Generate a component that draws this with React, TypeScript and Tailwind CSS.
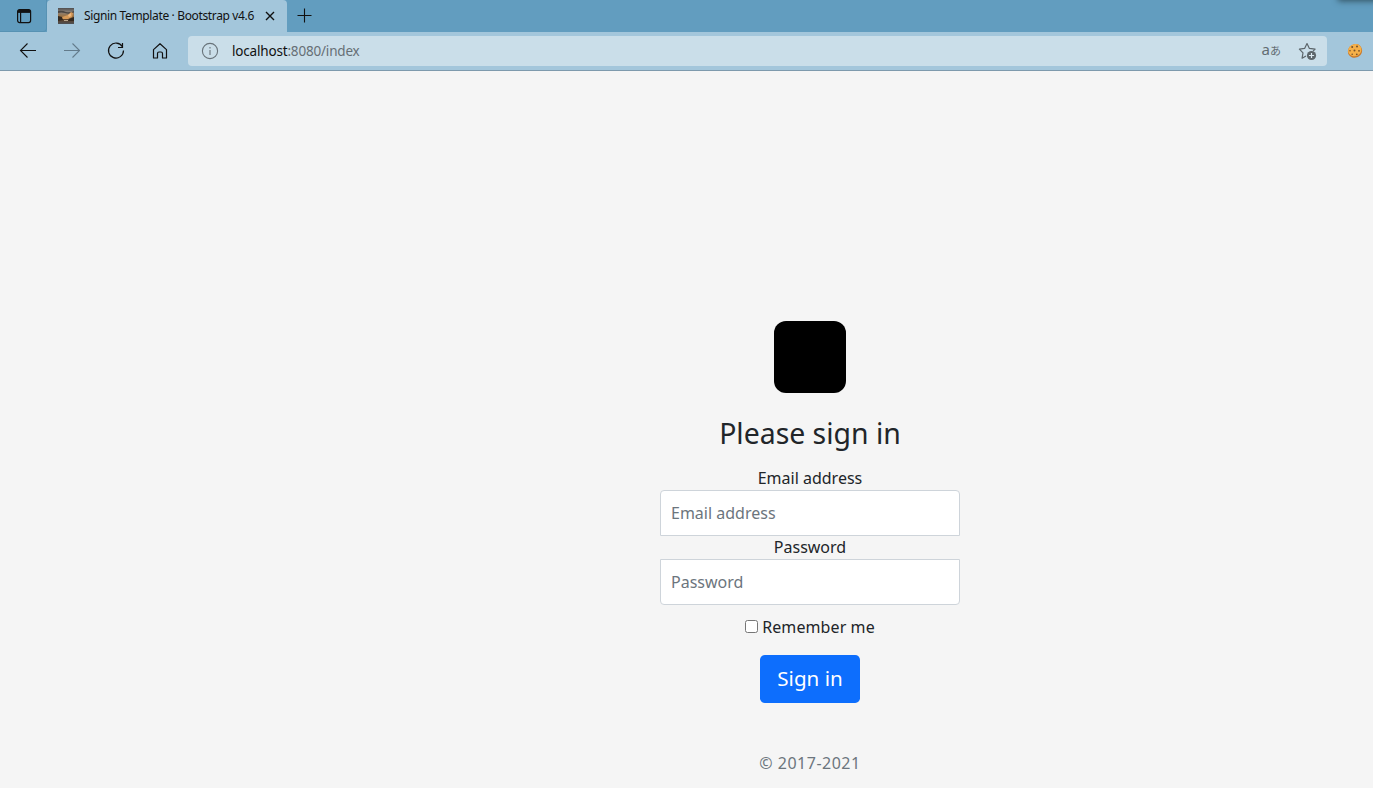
import React from "react";

function Toolbar() {
  return (
    <div className="flex h-[39px] items-center border-b border-[#7e9aad] bg-[#a3c6db] text-[#111]">
      <svg className="ml-[19px] h-[18px] w-[18px]" viewBox="0 0 18 18" fill="none" stroke="currentColor" strokeWidth="1.1">
        <path d="M17 8.5H1.5M8.5 1.5l-7 7 7 7" />
      </svg>
      <svg className="ml-[26px] h-[18px] w-[18px] text-[#637b8b]" viewBox="0 0 18 18" fill="none" stroke="currentColor" strokeWidth="1.1">
        <path d="M1 8.5h15.5M9.5 1.5l7 7-7 7" />
      </svg>
      <svg className="ml-[26px] h-[18px] w-[18px]" viewBox="0 0 18 18" fill="none" stroke="currentColor" strokeWidth="1.2">
        <path d="M15.4 4.6A7.5 7.5 0 1 0 16.5 8.5M15.5 1v4.5H11" />
      </svg>
      <svg className="ml-[26px] h-[18px] w-[18px]" viewBox="0 0 18 18" fill="none" stroke="currentColor" strokeWidth="1.2" strokeLinejoin="round">
        <path d="M2.5 7.6 9 1.7l6.5 5.9v8.4h-4v-4.5q0-1.5-1.5-1.5H8q-1.5 0-1.5 1.5v4.5h-4z" />
      </svg>
      <div className="ml-[19px] flex h-[30px] w-[1139px] items-center rounded bg-[#cadee9]">
        <svg className="ml-[13px] h-[18px] w-[18px] text-[#68737a]" viewBox="0 0 18 18" fill="none" stroke="currentColor" strokeWidth="1.1">
          <circle cx="9" cy="9" r="7.6" />
          <path d="M9 8v5M9 5v1.4" />
        </svg>
        <span className="ml-[13px] whitespace-nowrap text-[13.5px] leading-5 tracking-[-0.18px] text-[#666f75]">
          <span className="text-[#111]">localhost</span>:8080/index
        </span>
        <span className="mb-[3px] ml-auto flex items-baseline text-[#626c72]">
          <span className="text-[15px] leading-5">a</span>
          <span className="font-['Noto_Sans_CJK_JP',sans-serif] text-[11px] leading-5">あ</span>
        </span>
        <svg className="mr-[9px] ml-[17px] h-[20px] w-[20px] text-[#5c656a]" viewBox="0 0 20 20" fill="none" stroke="currentColor" strokeWidth="1.2" strokeLinejoin="round">
          <path d="M8 15 4.1 17.2 5 11.9 1.4 8.1l5.2-.7L9 2.6l2.4 4.8 5.7.7-2 2" />
          <circle cx="13.5" cy="14.5" r="4.6" fill="currentColor" stroke="none" />
          <path d="M13.5 11.9v5.2M10.9 14.5h5.2" stroke="#dceaf2" />
        </svg>
      </div>
      <svg className="ml-[20px] h-[16px] w-[16px]" viewBox="0 0 16 16">
        <path d="M7 1.2q5-1 7.3 3.2 2 4-.8 7.5-3.5 4-8.4 2.5Q.2 12.2 1 7.5 1.7 2.8 7 1.2Z" fill="#c9792b" />
        <path d="M7 1.2q4.7-.8 6.8 2.8 1.6 4-1 6.7-3 3.6-7.5 2.2Q.6 11.3 1.2 7 2 2.4 7 1.2Z" fill="#f5b049" />
        <g fill="#75502a">
          <circle cx="5.2" cy="4" r="1" /><circle cx="10" cy="3.6" r="1" />
          <circle cx="7.5" cy="7.6" r="1" /><circle cx="3" cy="7.8" r=".8" />
          <circle cx="12" cy="7.8" r=".9" /><circle cx="5.2" cy="11.2" r=".8" />
          <circle cx="9.8" cy="11.3" r=".9" />
        </g>
      </svg>
    </div>
  );
}

function TabBar() {
  return (
    <div className="relative flex h-8 overflow-hidden bg-[#629dbf]">
      <div className="flex w-[47px] items-center rounded-br border-r border-b border-[#5792b3] pl-4">
        <svg className="h-4 w-4" viewBox="0 0 16 16" fill="none" stroke="#111" strokeWidth="1.2">
          <rect x="1.6" y="1.6" width="13" height="13" rx="2" />
          <path d="M2 3.4h12.2" strokeWidth="3" />
          <path d="M4.6 4v10.5" />
        </svg>
      </div>
      <div className="flex w-[240px] items-center rounded-t bg-[#a3c6db] pl-[11px]">
        <svg className="h-4 w-4" viewBox="0 0 16 16">
          <defs>
            <linearGradient id="sunset" x1="0" y1="0" x2="0" y2="1">
              <stop offset="0" stopColor="#4f4e4f" />
              <stop offset="0.25" stopColor="#8a8078" />
              <stop offset="0.5" stopColor="#9a7448" />
              <stop offset="0.75" stopColor="#5b412b" />
              <stop offset="1" stopColor="#4d5155" />
            </linearGradient>
          </defs>
          <path fill="url(#sunset)" d="M0 0h16v16H0z" />
          <path fill="#4a4642" d="M0 3q4-1 8 1 4 1 8-1v1.5q-5 2-9 .5-4-1-7 0z" />
          <path fill="#d69a58" d="m4 9 6-2 3-3 2 1-1 4-4 2H4z" />
          <path fill="#efb97f" d="m10 7 3-2v3l-2 1z" />
          <path fill="#33291f" d="m0 8 4 1 1 3-5 1zM11 11l5-2v4h-6z" />
          <path fill="#b9a68c" d="M6 12h4v1H6z" />
        </svg>
        <span className="ml-[10px] w-[171px] whitespace-nowrap text-[12px] leading-4 tracking-[-0.36px] text-[#111]">
          Signin Template · Bootstrap v4.6
        </span>
        <svg className="ml-[10px] h-[10px] w-[10px]" viewBox="0 0 10 10" stroke="#111" strokeWidth="1.4">
          <path d="m1 1 8 8M9 1 1 9" />
        </svg>
      </div>
      <svg className="mt-2 ml-[10px] h-4 w-4" viewBox="0 0 16 16" stroke="#111" strokeWidth="1.1">
        <path d="M7.5.5v14M.5 7.5h14" />
      </svg>
      <div className="absolute -top-2 -right-2 h-2 w-[42px] shadow-[0_0_6px_1px_#31505f]" />
    </div>
  );
}

export default function App() {
  return (
    <div className="flex h-[788px] w-[1373px] flex-col overflow-hidden bg-[#f5f5f5] font-['Noto_Sans','Noto_Sans_CJK_JP',sans-serif]">
      <TabBar />
      <Toolbar />
      <main className="ml-[660px] flex w-[300px] flex-col items-center text-center text-[16px] leading-6 text-[#212529]">
        <div className="mt-[250px] h-[72px] w-[72px] rounded-[12px] bg-black" />
        <h1 className="mt-[23px] whitespace-nowrap text-[28.4px] leading-[34px]">Please sign in</h1>
        <label htmlFor="email" className="mt-4 h-6 whitespace-nowrap">Email address</label>
        <input
          id="email"
          type="email"
          placeholder="Email address"
          className="h-[46px] w-[300px] rounded-t border border-[#ced4da] bg-white px-[10px] placeholder:text-[#6c757d]"
        />
        <label htmlFor="password" className="h-[23px] whitespace-nowrap leading-[23px]">Password</label>
        <input
          id="password"
          type="password"
          placeholder="Password"
          className="h-[46px] w-[300px] rounded-b border border-[#ced4da] bg-white px-[10px] placeholder:text-[#6c757d]"
        />
        <label className="mt-[10px] flex h-6 items-center whitespace-nowrap">
          <input type="checkbox" className="mr-[4px] mb-[2px] h-[13px] w-[13px]" />
          <span className="tracking-[0.1px]">Remember me</span>
        </label>
        <button type="button" className="mt-4 h-12 w-[100px] rounded-[4.8px] bg-[#0d6efd] pb-[2px] text-[20.6px] leading-[30px] whitespace-nowrap text-white">
          Sign in
        </button>
        <p className="mt-12 whitespace-nowrap tracking-[0.5px] text-[#6c757d]">© 2017-2021</p>
      </main>
    </div>
  );
}
